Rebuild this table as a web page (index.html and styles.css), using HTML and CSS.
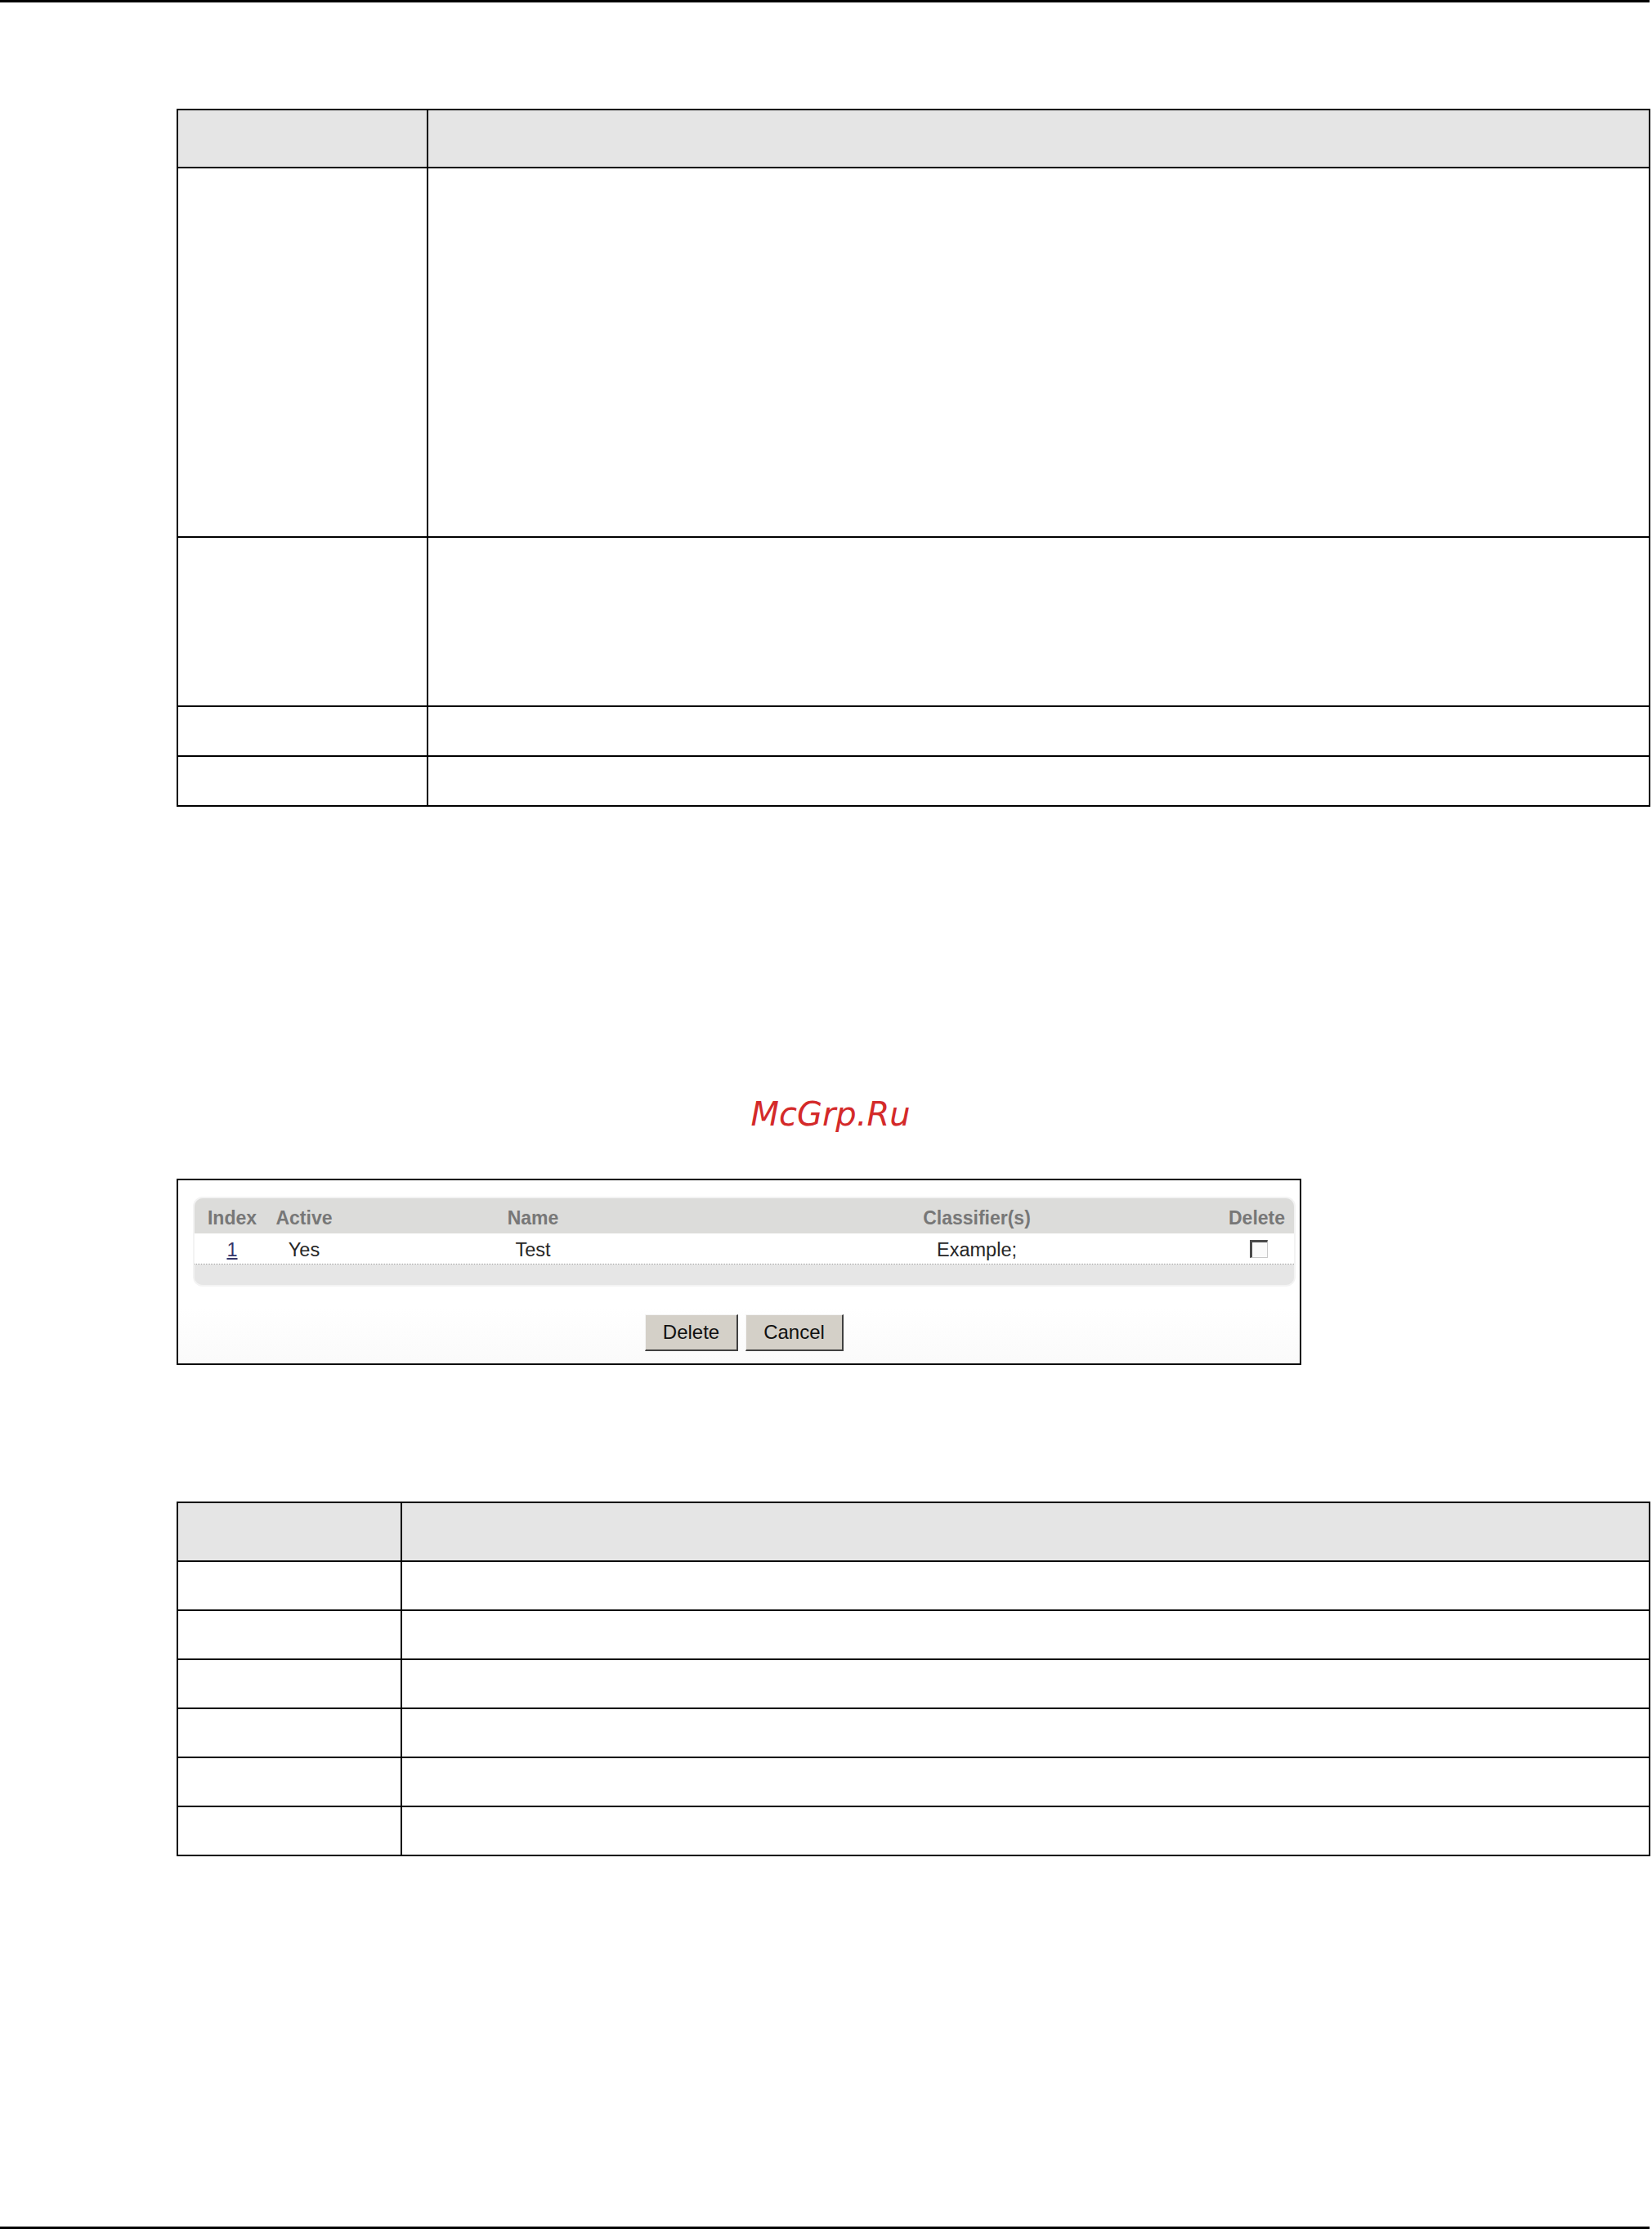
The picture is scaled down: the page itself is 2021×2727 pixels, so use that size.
FILE: index.html
```html
<!DOCTYPE html>
<html lang="en">
<head>
<meta charset="utf-8">
<title>Policy Route Delete</title>
<link rel="stylesheet" href="styles.css">
</head>
<body>
<div class="page">
  <div class="rule"></div>
  <main class="content">
    <table class="desc t1">
      <colgroup><col class="t1-c1"><col class="t1-c2"></colgroup>
      <tr class="r71 head"><th></th><th></th></tr>
      <tr class="r452"><td></td><td></td></tr>
      <tr class="r207"><td></td><td></td></tr>
      <tr class="r61"><td></td><td></td></tr>
      <tr class="r61"><td></td><td></td></tr>
    </table>

    <div class="mark">McGrp.Ru</div>

    <div class="shot">
      <div class="panel">
        <div class="prow phead">
          <span>Index</span><span>Active</span><span>Name</span><span>Classifier(s)</span><span>Delete</span>
        </div>
        <div class="prow pdata">
          <span><a class="idx" href="#">1</a></span><span>Yes</span><span>Test</span><span>Example;</span><span><span class="cb"></span></span>
        </div>
        <div class="pfoot"></div>
      </div>
      <div class="btns">
        <button class="btn btn-del" type="button">Delete</button>
        <button class="btn btn-can" type="button">Cancel</button>
      </div>
    </div>

    <table class="desc t2">
      <colgroup><col class="t2-c1"><col class="t2-c2"></colgroup>
      <tr class="r72 head"><th></th><th></th></tr>
      <tr class="r60"><td></td><td></td></tr>
      <tr class="r60"><td></td><td></td></tr>
      <tr class="r60"><td></td><td></td></tr>
      <tr class="r60"><td></td><td></td></tr>
      <tr class="r60"><td></td><td></td></tr>
      <tr class="r60"><td></td><td></td></tr>
    </table>
  </main>
  <div class="rule rule-b"></div>
</div>
</body>
</html>
```
FILE: styles.css
```css
html, body {
  margin: 0;
  padding: 0;
  background: #ffffff;
}

body {
  font-family: "Liberation Sans", Arial, sans-serif;
  color: #000;
}

.page {
  width: 2021px;
  min-height: 2727px;
  display: flex;
  flex-direction: column;
}

.rule {
  width: 2018px;
  height: 3px;
  background: #000;
  flex: none;
}

.rule-b {
  margin-top: auto;
}

.content {
  padding-left: 216px;
  display: flex;
  flex-direction: column;
  align-items: flex-start;
}

/* description tables */
.desc {
  border-collapse: separate;
  border-spacing: 0;
  table-layout: fixed;
  width: 1803px;
  border-top: 2px solid #000;
  border-left: 2px solid #000;
}

.desc th,
.desc td {
  padding: 0;
  border-right: 2px solid #000;
  border-bottom: 2px solid #000;
  background: #fff;
}

.desc .head th {
  background: #e5e5e5;
}

.t1 { margin-top: 130px; }
.t1-c1 { width: 306px; }
.t1-c2 { width: 1495px; }

.t2 { margin-top: 167px; }
.t2-c1 { width: 274px; }
.t2-c2 { width: 1527px; }

.r71 { height: 71px; }
.r72 { height: 72px; }
.r452 { height: 452px; }
.r207 { height: 207px; }
.r61 { height: 61px; }
.r60 { height: 60px; }

/* watermark */
.mark {
  align-self: stretch;
  margin-left: -216px;
  padding-left: 11px;
  margin-top: 352px;
  height: 48px;
  line-height: 48px;
  text-align: center;
  font-family: "DejaVu Sans", sans-serif;
  font-style: italic;
  font-size: 40px;
  color: #d42a2a;
}

/* screenshot frame */
.shot {
  margin-top: 55px;
  width: 1376px;
  height: 228px;
  box-sizing: border-box;
  border: 2px solid #000;
  padding: 22px 7px 0 20px;
  background: linear-gradient(#ffffff 70%, #fafafa);
}

.panel {
  width: 1345px;
  border-radius: 10px;
  overflow: hidden;
  background: #e6e6e6;
  box-shadow: 0 0 0 2px #f3f3f3;
}

.prow {
  display: grid;
  grid-template-columns: 86px 90px 470px 616px 68px;
  padding-left: 3px;
  padding-right: 12px;
  text-align: center;
  white-space: nowrap;
}

.phead {
  height: 43px;
  box-sizing: border-box;
  padding-top: 6px;
  line-height: 37px;
  background: #dcdcda;
  font-size: 23px;
  font-weight: bold;
  color: #777777;
}

.pdata {
  height: 38px;
  box-sizing: border-box;
  padding-top: 4px;
  line-height: 33px;
  background: #ffffff;
  border-bottom: 1px dotted #9a9a9a;
  font-size: 23.5px;
  color: #262626;
}

.idx {
  color: #35356a;
  text-decoration: underline;
}

.cb {
  display: inline-block;
  vertical-align: top;
  margin-top: 4px;
  margin-left: 6px;
  width: 22px;
  height: 22px;
  box-sizing: border-box;
  border-top: 3px solid #4a4a4a;
  border-left: 3px solid #4a4a4a;
  border-right: 1px solid #c8c8c8;
  border-bottom: 1px solid #c8c8c8;
  background: #fafafa;
}

.pfoot {
  height: 25px;
  background: #e6e6e6;
}

.btns {
  margin-top: 36px;
  display: flex;
  justify-content: center;
  gap: 9px;
}

.btn {
  height: 45px;
  box-sizing: border-box;
  margin: 0;
  padding: 0;
  background: #d4d0c8;
  border-top: 1px solid #f4f4f4;
  border-left: 1px solid #f4f4f4;
  border-right: 2px solid #404040;
  border-bottom: 2px solid #404040;
  font-family: "Liberation Sans", Arial, sans-serif;
  font-size: 24px;
  color: #111;
  line-height: 40px;
}

.btn-del { width: 114px; }
.btn-can { width: 120px; }
```
